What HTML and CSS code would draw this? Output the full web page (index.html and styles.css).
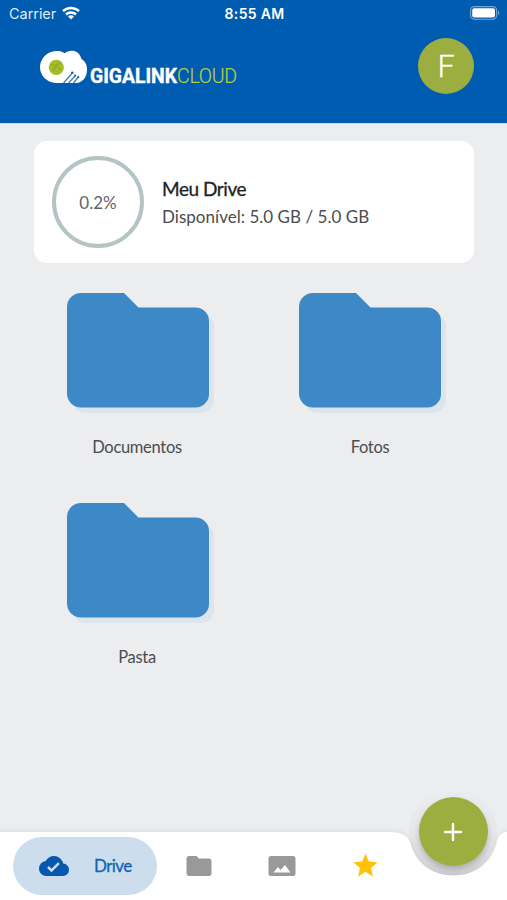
FILE: index.html
```html
<!DOCTYPE html>
<html lang="pt-BR">
<head>
<meta charset="utf-8">
<meta name="viewport" content="width=device-width, initial-scale=1">
<title>Gigalink Cloud</title>
<link rel="stylesheet" href="styles.css">
</head>
<body>
<div class="app">
  <header class="header">
    <div class="status">
      <div class="carrier">
        <span class="carrier-name">Carrier</span>
        <svg class="wifi" viewBox="0 0 18 14" width="18" height="14" fill="none" stroke="#fff" stroke-width="2.5">
          <path d="M1 5.2a11.3 11.3 0 0 1 16 0M4 8.5a7.1 7.1 0 0 1 10 0"/>
          <path d="M6 10.4a4.2 4.2 0 0 1 6 0L9 13.5z" fill="#fff" stroke="none"/>
        </svg>
      </div>
      <span class="clock">8:55 AM</span>
      <svg class="battery" viewBox="0 0 30 14" width="30" height="14">
        <rect x=".6" y=".6" width="26" height="12.6" rx="3.6" fill="none" stroke="#73a6d5" stroke-width="1.1"/>
        <rect x="2.2" y="2.2" width="22.8" height="9.4" rx="2" fill="#fff"/>
        <path d="M28 4.6q2.6 2.4 0 4.8z" fill="#73a6d5"/>
      </svg>
    </div>
    <div class="brandbar">
      <div class="logo">
        <svg class="logo-mark" viewBox="0 0 48 34" width="48" height="34">
          <path d="M16 1C22 .6 23.500 3 25 3C29-.5 39-1 41.500 9C45 11 47.500 15 47 21C46.500 27 43 32 37 33H15C6 32 0 25 0 17S7 1.200 16 1z" fill="#fff"/>
          <circle cx="16.300" cy="17.300" r="7.600" fill="#a2be22"/>
          <path d="M11 14l5 2 5-3M16 16l-3 6M16 16l6 4M12 20l7-8" fill="none" stroke="#8da52b" stroke-width=".8"/>
          <path d="M23.500 33l8.500-9.500M28.500 33l6.500-7M33.500 33l4.500-5.500" fill="none" stroke="#3c78b8" stroke-width="1.200"/>
          <circle cx="32.300" cy="22.800" r="1.300" fill="#1760ab"/><circle cx="35.200" cy="25.500" r="1.100" fill="#1760ab"/><circle cx="38.200" cy="27.200" r="1.100" fill="#1760ab"/>
        </svg>
        <svg class="wordmark" width="148" height="20" viewBox="0 0 148 20">
          <text class="giga" x="0" y="17" textLength="87" lengthAdjust="spacingAndGlyphs">GIGALINK</text>
          <text class="cloud" x="87" y="17" textLength="60" lengthAdjust="spacing">CLOUD</text>
        </svg>
      </div>
      <div class="avatar">F</div>
    </div>
  </header>

  <main class="main">
    <section class="card">
      <div class="ring"><span>0.2%</span></div>
      <div class="info">
        <div class="title">Meu Drive</div>
        <div class="space">Disponível: 5.0 GB / 5.0 GB</div>
      </div>
    </section>

    <section class="grid">
      <div class="item">
        <svg class="folder" viewBox="0 0 150 122" width="150" height="122"><use href="#folder" class="shade" x="5" y="5.5"/><path id="folder" d="M14 0H57L71.500 14.500H128.500A13.500 13.500 0 0 1 142 28V101A13.500 13.500 0 0 1 128.500 114.500H14A14 14 0 0 1 0 100.500V14A14 14 0 0 1 14 0z"/></svg>
        <span class="label">Documentos</span>
      </div>
      <div class="item">
        <svg class="folder" viewBox="0 0 150 122" width="150" height="122"><use href="#folder" class="shade" x="5" y="5.5"/><use href="#folder"/></svg>
        <span class="label photos">Fotos</span>
      </div>
      <div class="item">
        <svg class="folder" viewBox="0 0 150 122" width="150" height="122"><use href="#folder" class="shade" x="5" y="5.5"/><use href="#folder"/></svg>
        <span class="label">Pasta</span>
      </div>
    </section>
  </main>

  <nav class="nav">
    <svg class="nav-shape" viewBox="0 0 507 80" width="507" height="80">
      <defs>
        <linearGradient id="notch" x1="0" y1="0" x2="0" y2="1">
          <stop offset="0" stop-color="#000" stop-opacity="0"/>
          <stop offset=".55" stop-color="#000" stop-opacity=".03"/>
          <stop offset="1" stop-color="#000" stop-opacity=".1"/>
        </linearGradient>
      </defs>
      <circle cx="453" cy="12" r="44" fill="url(#notch)"/>
      <path class="nav-surface" d="M0 12H391C402 12 408 16 410.500 23C415 43 432 55.500 453.500 55.500S492 43 496.500 23C498 16 501 12.500 507 12V80H0z"/>
    </svg>
    <div class="tabs">
      <div class="tab active">
        <svg viewBox="0 0 24 24" width="30" height="30"><path d="M19.350 10.040A7.490 7.490 0 0 0 12 4C9.110 4 6.600 5.640 5.350 8.040A5.994 5.994 0 0 0 0 14c0 3.310 2.690 6 6 6h13c2.760 0 5-2.240 5-5 0-2.640-2.050-4.780-4.650-4.960zM10 17l-3.500-3.500 1.410-1.410L10 14.170l5.180-5.170 1.410 1.410L10 17z"/></svg>
        <span class="tab-label">Drive</span>
      </div>
      <svg class="tab-icon tab-folder" viewBox="0 0 24 24" width="30" height="30"><path d="M10 4H4c-1.100 0-2 .9-2 2v12c0 1.100.9 2 2 2h16c1.100 0 2-.9 2-2V8c0-1.100-.9-2-2-2h-8z"/></svg>
      <svg class="tab-icon tab-image" viewBox="0 0 28 30" width="28" height="30"><rect x=".5" y="5" width="27" height="20" rx="2.500"/><path d="M5.500 21.500L10 16 12.500 19 17 14 22.500 21.500z" fill="#fff"/></svg>
      <svg class="tab-icon tab-star" viewBox="0 0 24 24" width="29" height="29"><path d="M12 17.270L18.180 21l-1.640-7.030L22 9.240l-7.190-.61L12 2 9.190 8.630 2 9.240l5.460 4.730L5.820 21z"/></svg>
    </div>
    <div class="fab"><svg viewBox="0 0 20 20" width="20" height="20"><path d="M10 2v16M2 10h16" stroke="#fff" stroke-width="2.400" stroke-linecap="round"/></svg></div>
  </nav>
</div>
</body>
</html>
```
FILE: styles.css
```css
* { box-sizing: border-box; }
body { margin: 0; background: #ecedef; font-family: Lato, "Open Sans", sans-serif; }
svg { display: block; flex: none; }
.app { width: 507px; height: 900px; display: flex; flex-direction: column; overflow: hidden; background: #ecedef; }
.header { height: 123px; flex: none; background: #005cb0; color: #fff; box-shadow: 0 1px 0 #c9d8e8; }
.status { height: 28px; padding: 0 7px 2px 9px; display: grid; grid-template-columns: 1fr auto 1fr; align-items: center; font-family: Inter, sans-serif; }
.carrier { display: flex; align-items: center; gap: 6px; font-size: 14.5px; color: #dfeaf5; }
.carrier-name { letter-spacing: -0.05px; }
.clock { font-size: 14px; font-weight: 600; letter-spacing: 0.3px; }
.battery { justify-self: end; }
.brandbar { display: flex; justify-content: space-between; align-items: flex-start; padding: 10px 33px 0 40px; }
.logo { display: flex; padding-top: 12px; gap: 2px; }
.wordmark { margin-top: 16px; overflow: visible; }
.giga { font: 700 19.5px Roboto, sans-serif; fill: #fff; stroke: #fff; stroke-width: .4px; }
.cloud { font: 300 19.5px Roboto, sans-serif; fill: #b4cf3c; stroke: #b4cf3c; stroke-width: .2px; }
.avatar { width: 56px; height: 56px; border-radius: 50%; background: #9dae40; display: flex; align-items: center; justify-content: center; font-size: 31px; font-weight: 300; -webkit-text-stroke: 0.5px #fff; padding-bottom: 2px; }
.main { flex: 1; padding-top: 18px; }
.card { width: 440px; height: 122px; margin-left: 34px; padding-left: 18px; border-radius: 13px; background: #fff; display: flex; align-items: center; gap: 18px; }
.ring { width: 92px; height: 92px; border: 4px solid #b4c3c3; border-radius: 50%; display: flex; align-items: center; justify-content: center; color: #626466; font-size: 17px; }
.info { white-space: nowrap; padding-top: 2px; }
.title { font-size: 19px; line-height: 28px; letter-spacing: -0.45px; -webkit-text-stroke: 0.3px #222; color: #222; }
.space { font-size: 17px; line-height: 28px; color: #4b4c4e; letter-spacing: 0.03px; }
.grid { display: grid; grid-template-columns: 232px 232px; grid-auto-rows: 210px; margin: 30px 0 0 21px; }
.item { display: flex; flex-direction: column; align-items: center; }
.folder { fill: #3d89c7; margin-left: 9px; }
.shade { fill: #dce5ec; }
.label { margin-top: 20px; font-size: 16.5px; line-height: 24px; letter-spacing: -0.3px; color: #4b4c4e; }
.photos { padding-left: 2px; }
.nav { position: relative; display: flow-root; height: 80px; flex: none; }
.nav-shape { position: absolute; inset: 0; overflow: visible; }
.nav-surface { fill: #fff; filter: drop-shadow(0 -1px 2px rgba(0,0,0,.08)); }
.tabs { position: relative; display: flex; align-items: center; height: 58px; margin: 17px 0 0 13px; }
.tab { display: flex; align-items: center; }
.active { width: 144px; height: 58px; border-radius: 29px; background: #ccdeed; padding-left: 26px; gap: 25px; fill: #0757b0; color: #1462b4; font-size: 17px; letter-spacing: -0.6px; -webkit-text-stroke: 0.3px #1462b4; }
.tab-label { padding-bottom: 1px; }
.tab-icon { fill: #999; }
.tab-folder { margin-left: 27px; }
.tab-image { margin-left: 54px; }
.tab-star { margin-left: 54.5px; margin-bottom: 1px; fill: #ffc10a; }
.fab { position: absolute; left: 419px; top: -23px; width: 69px; height: 69px; border-radius: 50%; background: #9dae40; box-shadow: 0 4px 6px rgba(0,0,0,.2); display: flex; align-items: center; justify-content: center; padding-right: 1px; }
```
